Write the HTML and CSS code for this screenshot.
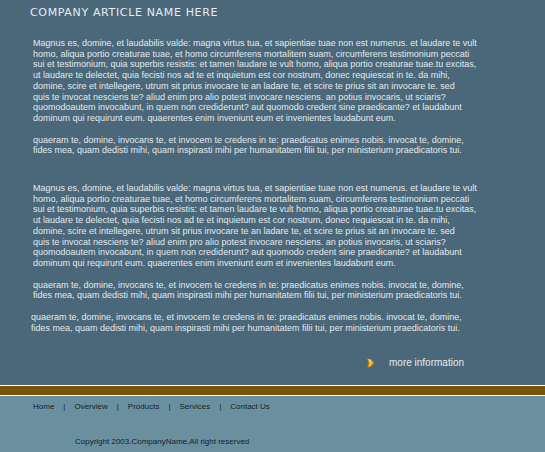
FILE: index.html
```html
<!DOCTYPE html>
<html>
<head>
<meta charset="utf-8">
<link rel="stylesheet" href="styles.css">
</head>
<body>
<div class="page">
  <main class="main">
    <h1 class="title">COMPANY ARTICLE NAME HERE</h1>
    <div class="article">
      <p>Magnus es, domine, et laudabilis valde: magna virtus tua, et sapientiae tuae non est numerus. et laudare te vult<br>homo, aliqua portio creaturae tuae, et homo circumferens mortalitem suam, circumferens testimonium peccati<br>sui et testimonium, quia superbis resistis: et tamen laudare te vult homo, aliqua portio creaturae tuae.tu excitas,<br>ut laudare te delectet, quia fecisti nos ad te et inquietum est cor nostrum, donec requiescat in te. da mihi,<br>domine, scire et intellegere, utrum sit prius invocare te an ladare te, et scire te prius sit an invocare te. sed<br>quis te invocat nesciens te? aliud enim pro alio potest invocare nesciens. an potius invocaris, ut sciaris?<br>quomodoautem invocabunt, in quem non crediderunt? aut quomodo credent sine praedicante? et laudabunt<br>dominum qui requirunt eum. quaerentes enim inveniunt eum et invenientes laudabunt eum.</p>
      <p>quaeram te, domine, invocans te, et invocem te credens in te: praedicatus enimes nobis. invocat te, domine,<br>fides mea, quam dedisti mihi, quam inspirasti mihi per humanitatem filii tui, per ministerium praedicatoris tui.</p>
      <p class="spaced">Magnus es, domine, et laudabilis valde: magna virtus tua, et sapientiae tuae non est numerus. et laudare te vult<br>homo, aliqua portio creaturae tuae, et homo circumferens mortalitem suam, circumferens testimonium peccati<br>sui et testimonium, quia superbis resistis: et tamen laudare te vult homo, aliqua portio creaturae tuae.tu excitas,<br>ut laudare te delectet, quia fecisti nos ad te et inquietum est cor nostrum, donec requiescat in te. da mihi,<br>domine, scire et intellegere, utrum sit prius invocare te an ladare te, et scire te prius sit an invocare te. sed<br>quis te invocat nesciens te? aliud enim pro alio potest invocare nesciens. an potius invocaris, ut sciaris?<br>quomodoautem invocabunt, in quem non crediderunt? aut quomodo credent sine praedicante? et laudabunt<br>dominum qui requirunt eum. quaerentes enim inveniunt eum et invenientes laudabunt eum.</p>
      <p>quaeram te, domine, invocans te, et invocem te credens in te: praedicatus enimes nobis. invocat te, domine,<br>fides mea, quam dedisti mihi, quam inspirasti mihi per humanitatem filii tui, per ministerium praedicatoris tui.</p>
      <p class="outdent">quaeram te, domine, invocans te, et invocem te credens in te: praedicatus enimes nobis. invocat te, domine,<br>fides mea, quam dedisti mihi, quam inspirasti mihi per humanitatem filii tui, per ministerium praedicatoris tui.</p>
    </div>
    <div class="more">
      <a class="more-link" href="#">
        <svg class="arrow" width="9" height="10" viewBox="0 0 9 10">
          <defs>
            <linearGradient id="g" x1="0" y1="0" x2="1" y2="1">
              <stop offset="0" stop-color="#fde98a"/>
              <stop offset="1" stop-color="#d98a10"/>
            </linearGradient>
          </defs>
          <path d="M1.5 1 L4.5 1 L8 5 L4.5 9 L1.5 9 L3 5 Z" fill="url(#g)" stroke="#b8740a" stroke-width="0.8"/>
        </svg>
        <span>more information</span>
      </a>
    </div>
  </main>
  <div class="divider"></div>
  <footer class="footer">
    <nav class="nav">
      <a href="#">Home</a><span class="sep">|</span>
      <a href="#">Overview</a><span class="sep">|</span>
      <a href="#">Products</a><span class="sep">|</span>
      <a href="#">Services</a><span class="sep">|</span>
      <a href="#">Contact Us</a>
    </nav>
    <p class="copy">Copyright 2003.CompanyName,All right reserved</p>
  </footer>
</div>
</body>
</html>
```
FILE: styles.css
```css
html, body {
  margin: 0;
  padding: 0;
}
body {
  background: #6a8f9f;
  font-family: "Liberation Sans", Arial, sans-serif;
}
.page {
  width: 545px;
  height: 452px;
  overflow: hidden;
}
.main {
  background: #4a6879;
  height: 385px;
  display: flex;
  flex-direction: column;
}
.title {
  margin: 0;
  padding: 7px 0 0 30px;
  font-family: "DejaVu Sans", Verdana, sans-serif;
  font-weight: normal;
  font-size: 11px;
  line-height: 12px;
  letter-spacing: 0.65px;
  color: #e6ecef;
}
.article {
  padding: 19px 0 0 33px;
  color: #e4e9ec;
  font-size: 9px;
  line-height: 10.7px;
}
.article p {
  margin: 0 0 11px 0;
  white-space: nowrap;
}
.article p.spaced {
  margin-top: 27px;
}
.article p.outdent {
  margin-left: -2px;
  margin-bottom: 0;
}
.more {
  display: flex;
  justify-content: flex-start;
  padding: 24px 0 0 366px;
}
.more-link {
  display: flex;
  align-items: center;
  gap: 14px;
  color: #e4e9ec;
  text-decoration: none;
  font-size: 10px;
  line-height: 12px;
}
.arrow {
  display: block;
}
.divider {
  height: 9px;
  background: #7a5306;
  border-top: 1px solid #ffffff;
  border-bottom: 1px solid #ffffff;
}
.footer {
  padding: 6px 0 0 33px;
}
.nav {
  display: flex;
  align-items: center;
  gap: 9px;
  font-size: 8px;
  line-height: 10px;
}
.nav a {
  color: #15242c;
  text-decoration: none;
}
.sep {
  color: #15242c;
}
.copy {
  margin: 25px 0 0 42px;
  font-size: 8px;
  line-height: 10px;
  color: #15242c;
}
```
